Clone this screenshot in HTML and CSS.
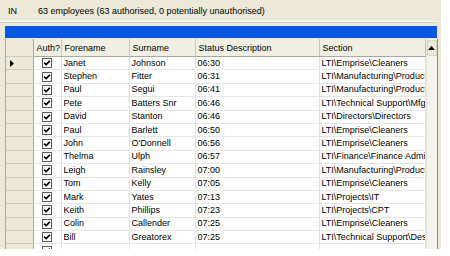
FILE: index.html
```html
<!doctype html>
<html lang="en">
  <head>
    <meta charset="UTF-8" />
    <title>Employees</title>
    <link rel="stylesheet" href="styles.css">
  </head>
  <body>
    <div class="window">
      <div class="info">
        <span class="mode">IN</span>
        <span class="summary">63 employees (63 authorised, 0 potentially unauthorised)</span>
      </div>

      <div class="titlebar"></div>

      <div class="grid">
        <table class="rows">
          <colgroup>
            <col class="c-ind"><col class="c-auth"><col class="c-fore"><col class="c-sur"><col class="c-status"><col class="c-section">
          </colgroup>
          <thead>
            <tr>
              <th class="ind"></th><th>Auth?</th><th>Forename</th><th>Surname</th><th>Status Description</th><th>Section</th>
            </tr>
          </thead>
          <tbody id="body"></tbody>
        </table>
        <div class="vscroll">
          <div class="up">
            <svg width="7" height="4" viewBox="0 0 7 4"><path d="M0 4 L3.5 0 L7 4 Z" fill="#000"/></svg>
          </div>
        </div>
      </div>
    </div>

    <script>
      const rows = [
        ['Janet', 'Johnson', '06:30', 'LTI\\Emprise\\Cleaners'],
        ['Stephen', 'Fitter', '06:31', 'LTI\\Manufacturing\\Production'],
        ['Paul', 'Segui', '06:41', 'LTI\\Manufacturing\\Production'],
        ['Pete', 'Batters Snr', '06:46', 'LTI\\Technical Support\\Mfg'],
        ['David', 'Stanton', '06:46', 'LTI\\Directors\\Directors'],
        ['Paul', 'Barlett', '06:50', 'LTI\\Emprise\\Cleaners'],
        ['John', "O'Donnell", '06:56', 'LTI\\Emprise\\Cleaners'],
        ['Thelma', 'Ulph', '06:57', 'LTI\\Finance\\Finance Admin'],
        ['Leigh', 'Rainsley', '07:00', 'LTI\\Manufacturing\\Production'],
        ['Tom', 'Kelly', '07:05', 'LTI\\Emprise\\Cleaners'],
        ['Mark', 'Yates', '07:13', 'LTI\\Projects\\IT'],
        ['Keith', 'Phillips', '07:23', 'LTI\\Projects\\CPT'],
        ['Colin', 'Callender', '07:25', 'LTI\\Emprise\\Cleaners'],
        ['Bill', 'Greatorex', '07:25', 'LTI\\Technical Support\\Design'],
        ['', '', '', '']
      ];

      const check = '<svg class="box" width="10" height="10" viewBox="0 0 10 10">' +
        '<rect x="0.5" y="0.5" width="9" height="9" fill="#fff" stroke="#5a5a5a"/>' +
        '<path d="M2.2 4.6 L4.2 6.6 L7.8 2.8" fill="none" stroke="#000" stroke-width="1.7"/></svg>';

      const body = document.getElementById('body');
      rows.forEach((r, i) => {
        const tr = document.createElement('tr');
        const arrow = i === 0
          ? '<svg width="4" height="7" viewBox="0 0 4 7"><path d="M0 0 L4 3.5 L0 7 Z" fill="#000"/></svg>'
          : '';
        tr.innerHTML =
          `<td class="ind">${arrow}</td><td class="auth">${check}</td>` +
          `<td>${r[0]}</td><td>${r[1]}</td><td>${r[2]}</td><td>${r[3]}</td>`;
        body.appendChild(tr);
      });
    </script>
  </body>
</html>
```

FILE: styles.css
```css
body {
  margin: 0;
  background: #fff;
  font-family: "Liberation Sans", Arial, sans-serif;
  font-size: 9px;
  color: #000;
}
.window {
  width: 441px;
  height: 249px;
  background: #ece9d8;
  overflow: hidden;
}
.info {
  height: 21px;
  display: flex;
  align-items: center;
  padding-left: 8px;
  border-bottom: 1px solid #f6f5ee;
  box-shadow: 0 1px 0 #d6d2c2;
  width: 429px;
}
.mode {
  width: 30px;
}
.titlebar {
  margin: 4px 0 0 5px;
  width: 432px;
  height: 12px;
  background: #0758e0;
}
.grid {
  margin: 1px 0 0 5px;
  width: 431px;
  display: flex;
  border-left: 1px solid #aca899;
  border-right: 1px solid #8d8a7e;
}
.rows {
  width: 419px;
  table-layout: fixed;
  border-collapse: collapse;
  background: #fff;
}
.c-ind { width: 27px; }
.c-auth { width: 28px; }
.c-fore { width: 68px; }
.c-sur { width: 66px; }
.c-status { width: 124px; }
.c-section { width: 106px; }
th {
  height: 17px;
  padding: 0 0 0 3px;
  text-align: left;
  font-weight: normal;
  background: #f1efe4;
  border-right: 1px solid #cbc7b8;
  border-bottom: 1px solid #aca899;
  white-space: nowrap;
  overflow: hidden;
}
tbody tr {
  height: 13.4px;
}
td {
  padding: 0 0 0 2px;
  border-right: 1px solid #e2e0d8;
  border-bottom: 1px solid #e8e6e0;
  white-space: nowrap;
  overflow: hidden;
  line-height: 11px;
}
td.ind, th.ind {
  background: #ece9d8;
  border-right: 1px solid #aca899;
  border-bottom: 1px solid #cfcbbb;
  padding: 0 0 0 4px;
}
td.ind svg {
  display: block;
}
td.auth {
  padding: 0 0 0 8px;
}
td.auth .box {
  display: block;
}
.vscroll {
  width: 11px;
  background: #f4f3ee;
  border-left: 1px solid #e6e4da;
}
.up {
  height: 14px;
  margin-top: 1px;
  background: #ece9d8;
  border: 1px solid #d8d5c6;
  display: flex;
  align-items: center;
  justify-content: center;
}
```
